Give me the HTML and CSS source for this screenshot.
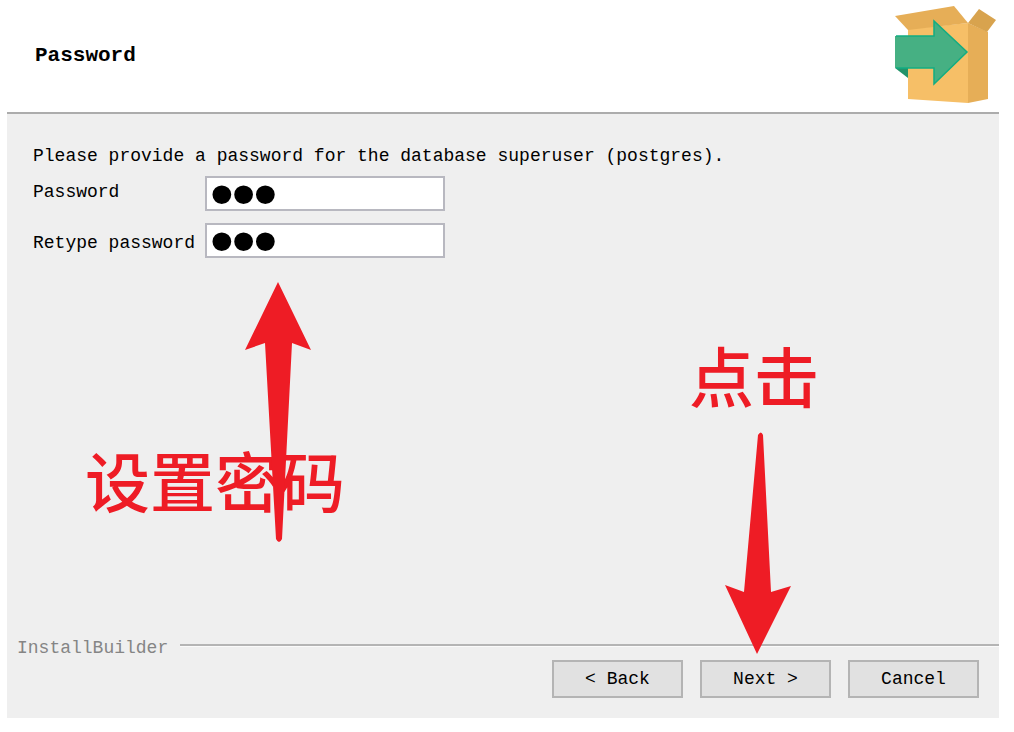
FILE: index.html
```html
<!DOCTYPE html>
<html lang="en">
<head>
<meta charset="utf-8">
<title>Password</title>
<link rel="stylesheet" href="styles.css">
</head>
<body>
<main class="wizard">
  <header class="header">
    <h1 class="title">Password</h1>
    <svg class="logo" viewBox="0 0 104 100" aria-hidden="true">
      <path fill="#f6bf67" d="M16 23 76 17V97L16 93z"/>
      <path fill="#e6ae57" d="M76 17 96 26V93L76 97z"/>
      <path fill="#e6ae57" d="M3 10 62 0 76 17 16 24z"/>
      <path fill="#d8a34e" d="M76 17 87 3 104 14 95 26z"/>
      <path fill="#23936a" d="M3 62H16V72z"/>
      <path fill="#46b083" d="M3 30H42V15L75 46 42 78V62H3z"/>
      <path fill="none" stroke="#12ad82" stroke-width="1.5" d="M4 30H42V15L75 46 42 78V62H4"/>
    </svg>
  </header>
  <form class="content">
    <p class="intro">Please provide a password for the database superuser (postgres).</p>
    <div class="fields">
      <label class="label" for="password">Password</label>
      <input class="field" id="password" type="password" value="123">
      <label class="label label-low" for="retype">Retype password</label>
      <input class="field" id="retype" type="password" value="123">
    </div>
  </form>
  <footer class="footer">
    <div class="brand">InstallBuilder<span class="rule"></span></div>
    <div class="buttons">
      <button class="button" type="button">&lt; Back</button>
      <button class="button" type="button">Next &gt;</button>
      <button class="button" type="button">Cancel</button>
    </div>
  </footer>
  <span class="note note-set" lang="zh-CN">设置密码</span>
  <span class="note note-click" lang="zh-CN">点击</span>
  <svg class="arrow arrow-up" viewBox="0 0 66 261" aria-hidden="true"><path d="M33 0 66 68 47 61 37 257Q34 263 31 257L20 61 0 68z"/></svg>
  <svg class="arrow arrow-down" viewBox="0 0 66 222" aria-hidden="true"><path d="M32 222 0 153 19 160 33 3Q36-2 38 3L46 160 66 154z"/></svg>
</main>
</body>
</html>
```
FILE: styles.css
```css
* {
  box-sizing: border-box;
}

body {
  margin: 0;
  min-height: 100vh;
  display: flex;
  padding: 0 15px 14px 7px;
  background: #fff;
  color: #000;
  font: 18px/24px "Liberation Mono", "Noto Sans CJK SC", monospace;
}

.wizard {
  position: relative;
  flex: 1;
  display: flex;
  flex-direction: column;
  background: #efefef;
}

.header {
  display: flex;
  justify-content: space-between;
  align-items: center;
  padding: 6px 3px 6px 28px;
  background: #fff;
  border-bottom: 2px solid #acacac;
}

.title {
  margin: 0;
  font-size: 21px;
  line-height: 24px;
}

.logo {
  width: 104px;
  height: 100px;
}

.content {
  flex: 1;
  padding: 30px 26px;
}

.intro {
  margin: 0 0 8px;
}

.fields {
  display: grid;
  grid-template-columns: 162px 240px;
  column-gap: 10px;
  row-gap: 12px;
}

.label {
  padding-top: 4px;
  white-space: nowrap;
}

.label-low {
  padding-top: 8px;
}

.field {
  width: 100%;
  height: 35px;
  padding: 0 4px;
  border: 2px solid #b8b8c0;
  border-radius: 0;
  background: #fff;
  color: #000;
  font: 62px/31px "Liberation Sans", sans-serif;
  -webkit-text-stroke: 2px #000;
}

.footer {
  padding: 0 0 20px 10px;
}

.brand {
  display: flex;
  gap: 12px;
  color: #858585;
}

.rule {
  flex: 1;
  height: 3px;
  margin-top: 8px;
  border-top: 2px solid #b4b4b4;
  border-bottom: 1px solid #fafafa;
}

.buttons {
  display: flex;
  justify-content: flex-end;
  gap: 17px;
  padding-right: 20px;
}

.button {
  width: 131px;
  height: 38px;
  padding: 0;
  border: 2px solid #b4b4b4;
  background: #e1e1e1;
  color: #000;
  font: inherit;
}

.note {
  position: absolute;
  color: #ee1c25;
  font: 500 65px/72px "Noto Sans CJK SC", sans-serif;
  white-space: nowrap;
}

.note-set {
  left: 78px;
  top: 443px;
}

.note-click {
  left: 682px;
  top: 338px;
}

.arrow {
  position: absolute;
  width: 66px;
  fill: #ee1c25;
  pointer-events: none;
}

.arrow-up {
  left: 238px;
  top: 282px;
  height: 261px;
}

.arrow-down {
  left: 718px;
  top: 432px;
  height: 222px;
}
```
